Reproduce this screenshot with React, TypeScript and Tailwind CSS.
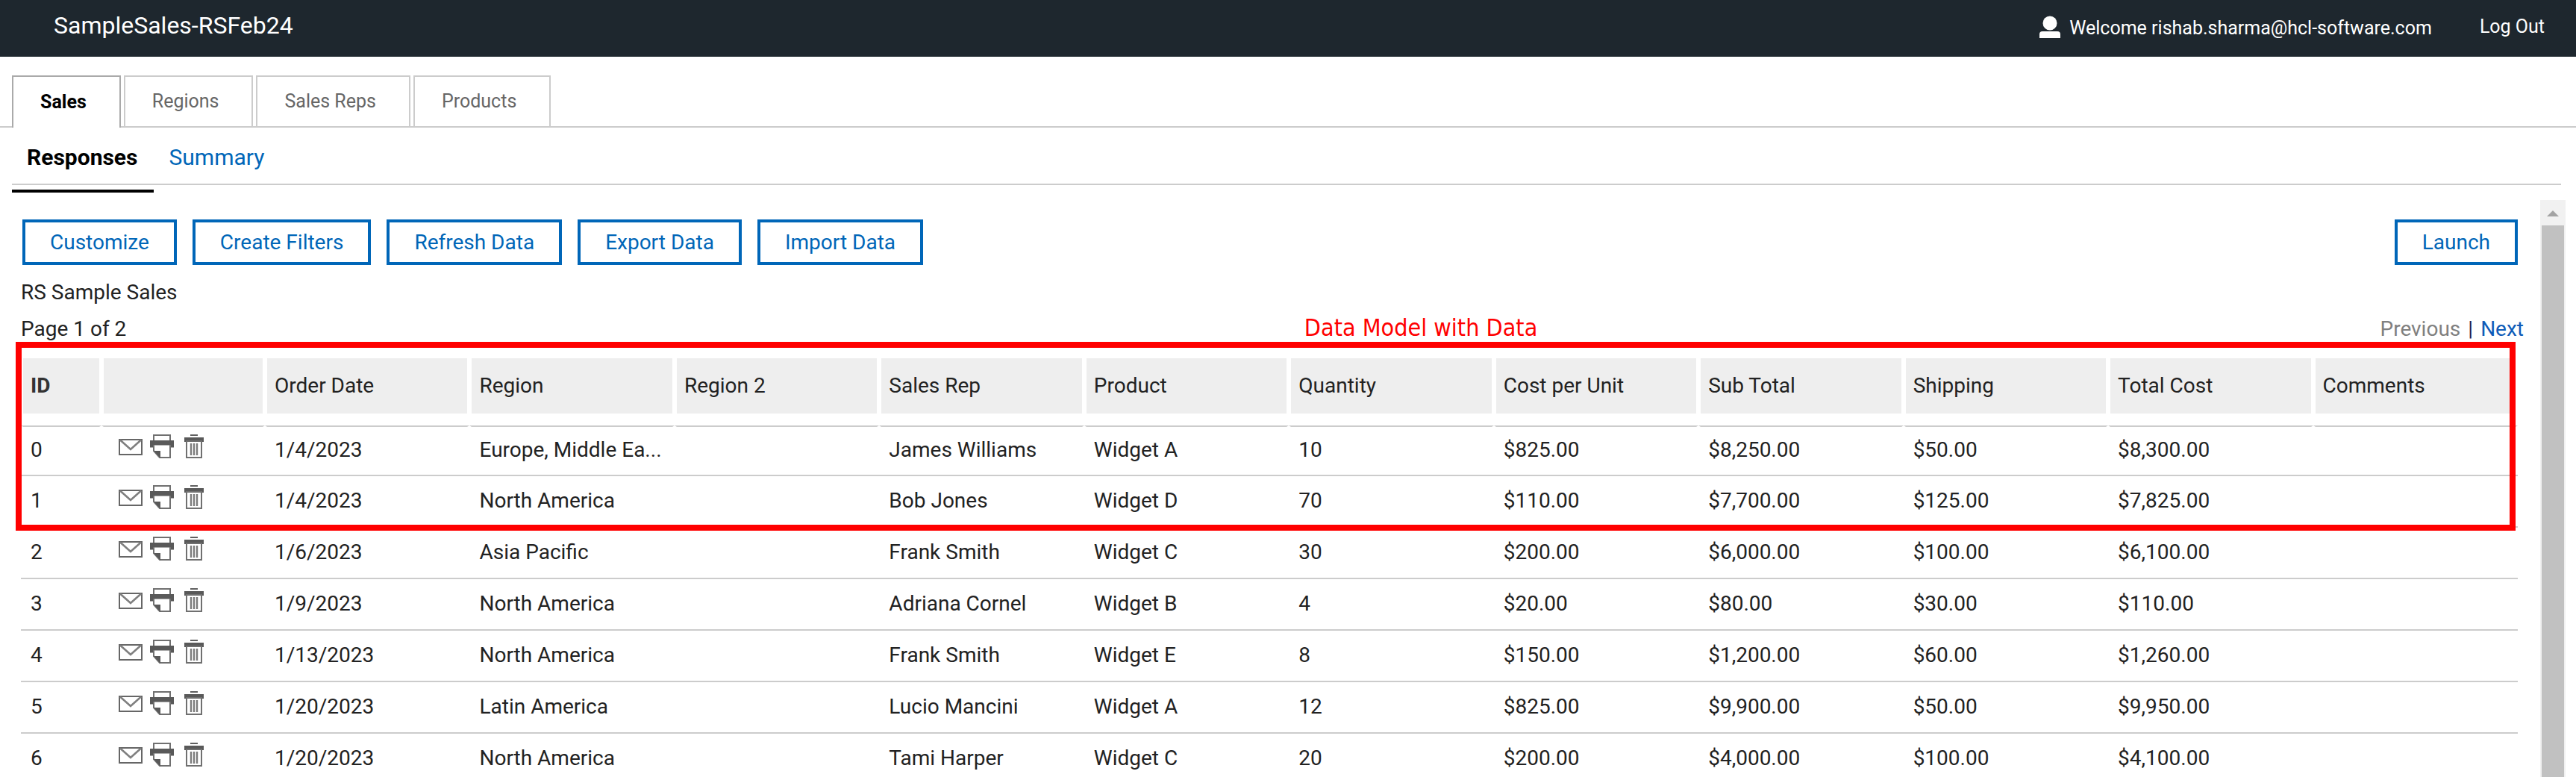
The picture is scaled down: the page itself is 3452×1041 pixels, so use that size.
import React from "react";

type Row = {
  id: number;
  date: string;
  region: string;
  rep: string;
  product: string;
  qty: string;
  unit: string;
  sub: string;
  ship: string;
  total: string;
};

const rows: Row[] = [
  { id: 0, date: "1/4/2023", region: "Europe, Middle Ea...", rep: "James Williams", product: "Widget A", qty: "10", unit: "$825.00", sub: "$8,250.00", ship: "$50.00", total: "$8,300.00" },
  { id: 1, date: "1/4/2023", region: "North America", rep: "Bob Jones", product: "Widget D", qty: "70", unit: "$110.00", sub: "$7,700.00", ship: "$125.00", total: "$7,825.00" },
  { id: 2, date: "1/6/2023", region: "Asia Pacific", rep: "Frank Smith", product: "Widget C", qty: "30", unit: "$200.00", sub: "$6,000.00", ship: "$100.00", total: "$6,100.00" },
  { id: 3, date: "1/9/2023", region: "North America", rep: "Adriana Cornel", product: "Widget B", qty: "4", unit: "$20.00", sub: "$80.00", ship: "$30.00", total: "$110.00" },
  { id: 4, date: "1/13/2023", region: "North America", rep: "Frank Smith", product: "Widget E", qty: "8", unit: "$150.00", sub: "$1,200.00", ship: "$60.00", total: "$1,260.00" },
  { id: 5, date: "1/20/2023", region: "Latin America", rep: "Lucio Mancini", product: "Widget A", qty: "12", unit: "$825.00", sub: "$9,900.00", ship: "$50.00", total: "$9,950.00" },
  { id: 6, date: "1/20/2023", region: "North America", rep: "Tami Harper", product: "Widget C", qty: "20", unit: "$200.00", sub: "$4,000.00", ship: "$100.00", total: "$4,100.00" },
];

const columns = [
  "Order Date",
  "Region",
  "Region 2",
  "Sales Rep",
  "Product",
  "Quantity",
  "Cost per Unit",
  "Sub Total",
  "Shipping",
  "Total Cost",
  "Comments",
];

const tools = ["Customize", "Create Filters", "Refresh Data", "Export Data", "Import Data"];

function MailIcon() {
  return (
    <svg viewBox="0 0 32 32" className="size-8" fill="none">
      <rect x="1" y="7" width="30" height="20" stroke="#666" strokeWidth="2" />
      <path d="M2 7.5 L16 20 L30 7.5" stroke="#808080" strokeWidth="2.6" />
    </svg>
  );
}

function PrintIcon() {
  return (
    <svg viewBox="0 0 32 32" className="size-8" fill="none">
      <path d="M5 9 V1 H27 V9" stroke="#707070" strokeWidth="2" />
      <path d="M0 8 H32 V17.500 H28 V14.500 H4 V17.500 H0 Z" fill="#595959" />
      <path d="M5 14 V22 L13 31 H27 V14" stroke="#707070" strokeWidth="2" />
      <path d="M5 22 H14 V32 Z" fill="#595959" />
    </svg>
  );
}

function TrashIcon() {
  return (
    <svg viewBox="0 0 32 32" className="size-8" fill="none">
      <rect x="12" y="0" width="10" height="2" fill="#606060" />
      <rect x="4" y="4" width="26" height="6" fill="#595959" />
      <rect x="7" y="9" width="20" height="22" stroke="#707070" strokeWidth="2" />
      <path d="M13 12 V28 M17 12 V28 M21 12 V28" stroke="#7c7c7c" strokeWidth="2.4" />
    </svg>
  );
}

function Tab({ label, active = false }: { label: string; active?: boolean }) {
  return (
    <button
      type="button"
      role="tab"
      aria-selected={active}
      className={
        active
          ? "-mb-0.5 h-[70px] border-2 border-b-0 border-[#aaa] bg-white pl-9 pr-11 font-bold text-black"
          : "h-[68px] border-2 border-b-0 border-[#ccc] bg-white pl-9 pr-11 text-[#666]"
      }
    >
      {label}
    </button>
  );
}

function DataRow({ row, first }: { row: Row; first: boolean }) {
  // The rule under the header is broken at each column seam; the others are continuous.
  const cell = first
    ? "h-[66px] border-x-3 border-t-2 border-x-white border-t-[#ccc] px-2.5 pt-[5px] pb-[7px]"
    : "h-[69px] border-t-2 border-t-[#ccc] px-[13px] pt-[5px] pb-[7px]";
  const values = [row.date, row.region, "", row.rep, row.product, row.qty, row.unit, row.sub, row.ship, row.total, ""];
  return (
    <tr>
      <td className={cell}>{row.id}</td>
      <td className={cell}>
        <div className="flex gap-2.5 pb-2.5 pl-2.5">
          <button type="button" aria-label="Email"><MailIcon /></button>
          <button type="button" aria-label="Print"><PrintIcon /></button>
          <button type="button" aria-label="Delete"><TrashIcon /></button>
        </div>
      </td>
      {values.map((value, i) => (
        <td key={columns[i]} className={cell}>
          <span className="whitespace-nowrap">{value}</span>
        </td>
      ))}
    </tr>
  );
}

export default function App() {
  return (
    <div className="flex h-screen flex-col overflow-hidden bg-white font-['Roboto',sans-serif] text-[28px] leading-8 text-[#222]">
      <header className="flex h-[76px] shrink-0 items-center justify-between bg-[#1e272e] pb-2 pl-[72px] pr-[42px] text-white">
        <h1 className="text-[32px] leading-9">SampleSales-RSFeb24</h1>
        <div className="flex items-center pt-1 text-[25px]">
          <svg viewBox="0 0 28 32" className="mr-3 h-8 w-7" fill="#fff">
            <circle cx="14" cy="11" r="9.500" />
            <path d="M0 31 V26 Q0 22 4 22 H24 Q28 22 28 26 V31 Z" />
          </svg>
          <span className="pt-1">Welcome rishab.sharma@hcl-software.com</span>
          <a href="#logout" className="ml-16">Log Out</a>
        </div>
      </header>

      <div role="tablist" className="mt-[25px] flex shrink-0 gap-1 border-b-2 border-[#ccc] pl-4 text-[25px]">
        <Tab label="Sales" active />
        <Tab label="Regions" />
        <Tab label="Sales Reps" />
        <Tab label="Products" />
      </div>

      <nav className="ml-4 mr-5 flex h-[77px] shrink-0 items-start border-b-2 border-[#ccc] text-[30px]">
        <a href="#responses" className="h-[87px] border-b-4 border-black pl-5 pr-5.5 pt-6 font-bold text-black">
          Responses
        </a>
        <a href="#summary" className="px-5 pt-6 text-[#0066b8]">Summary</a>
      </nav>

      <main className="mt-5 flex min-h-0 flex-1 pl-7 pr-3.5">
        <div className="min-w-0 flex-1 pr-[30px] pt-[26px]">
          <div className="flex justify-between pl-0.5">
            <div className="flex gap-[21px]">
              {tools.map((t) => (
                <button key={t} type="button" className="h-[61px] border-4 border-[#0066b8] px-[33px] text-[#0066b8]">
                  {t}
                </button>
              ))}
            </div>
            <button type="button" className="h-[61px] border-4 border-[#0066b8] px-[33px] text-[#0066b8]">
              Launch
            </button>
          </div>

          <p className="mt-[21px]">RS Sample Sales</p>
          <div className="-mr-2 mt-[17px] flex justify-between">
            <span>Page 1 of 2</span>
            <span>
              <span className="text-[#808080]">Previous</span>
              <span className="px-2.5 text-[#1c1c50]">|</span>
              <a href="#next" className="text-[#0f5cb8]">Next</a>
            </span>
          </div>

          <div className="relative mt-5">
            <table className="w-full table-fixed border-separate border-spacing-0 text-left">
              <colgroup>
                <col className="w-[108px]" />
                <col className="w-[219px]" />
                {columns.map((c) => (
                  <col key={c} />
                ))}
              </colgroup>
              <thead>
                <tr className="[&_th]:border-x-3 [&_th]:border-t-3 [&_th]:border-b-16 [&_th]:border-white [&_th]:bg-[#eee] [&_th]:bg-clip-padding [&_th]:px-2.5">
                  <th className="h-[93px] font-bold text-[#333]">ID</th>
                  <th aria-label="Actions" />
                  {columns.map((c) => (
                    <th key={c} className="font-normal">
                      {c}
                    </th>
                  ))}
                </tr>
              </thead>
              <tbody>
                {rows.map((r, i) => (
                  <DataRow key={r.id} row={r} first={i === 0} />
                ))}
              </tbody>
            </table>
            <div className="pointer-events-none absolute -left-[7px] -top-[19px] right-[3px] h-[253px] border-8 border-[#f00]" />
            <div className="absolute left-[51.4%] -top-14 whitespace-nowrap font-['DejaVu_Sans_Condensed','DejaVu_Sans',sans-serif] text-[32px] leading-9 text-[#f00]">
              Data Model with Data
            </div>
          </div>
        </div>

        <div aria-hidden="true" className="flex w-[34px] shrink-0 flex-col bg-[#f1f1f1]">
          <svg viewBox="0 0 34 34" className="size-[34px] shrink-0">
            <path d="M9 22 L17 14 L25 22 Z" fill="#a3a3a3" />
          </svg>
          <div className="mx-0.5 flex-1 bg-[#c1c1c1]" />
        </div>
      </main>
    </div>
  );
}
